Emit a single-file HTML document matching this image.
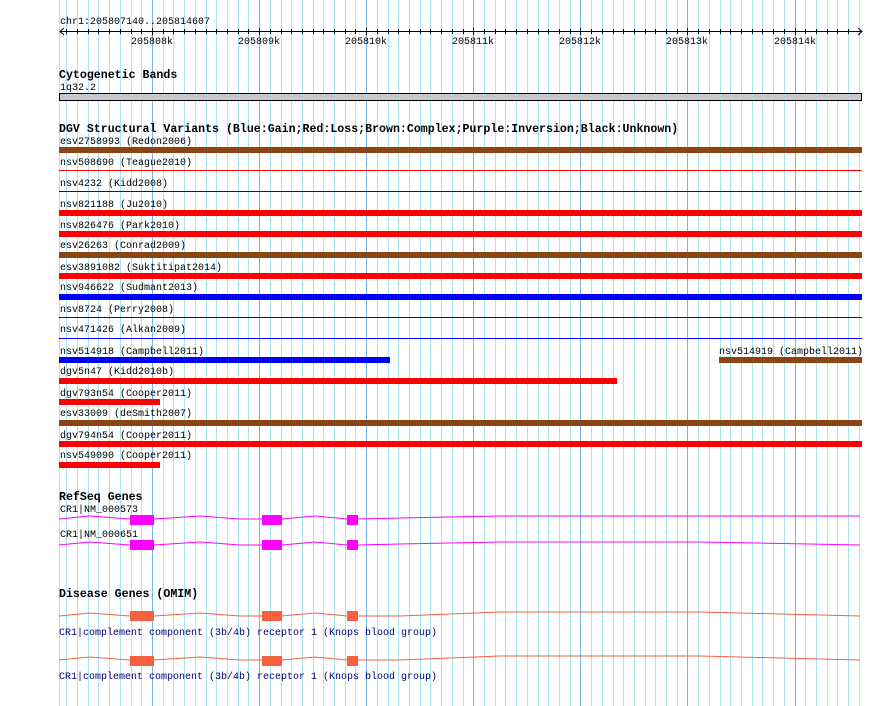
<!DOCTYPE html>
<html><head><meta charset="utf-8"><style>
html,body{margin:0;padding:0;background:#fff;width:890px;height:706px;overflow:hidden}
svg{display:block}
text{font-family:"Liberation Mono","DejaVu Sans Mono",monospace;font-size:10px;fill:#000}
.t{font-weight:bold;font-size:11.6px}
.b{fill:#00007a}
</style></head><body>
<svg width="890" height="706" xmlns="http://www.w3.org/2000/svg" shape-rendering="crispEdges">
<path stroke="#a8e6ee" stroke-width="1" fill="none" d="M59.5 0V706M66.5 0V706M77.5 0V706M88.5 0V706M98.5 0V706M109.5 0V706M120.5 0V706M131.5 0V706M141.5 0V706M163.5 0V706M173.5 0V706M184.5 0V706M195.5 0V706M206.5 0V706M216.5 0V706M227.5 0V706M238.5 0V706M248.5 0V706M270.5 0V706M281.5 0V706M291.5 0V706M302.5 0V706M313.5 0V706M323.5 0V706M334.5 0V706M345.5 0V706M355.5 0V706M377.5 0V706M388.5 0V706M398.5 0V706M409.5 0V706M420.5 0V706M430.5 0V706M441.5 0V706M452.5 0V706M463.5 0V706M484.5 0V706M495.5 0V706M505.5 0V706M516.5 0V706M527.5 0V706M538.5 0V706M548.5 0V706M559.5 0V706M570.5 0V706M591.5 0V706M602.5 0V706M613.5 0V706M623.5 0V706M634.5 0V706M645.5 0V706M655.5 0V706M666.5 0V706M677.5 0V706M698.5 0V706M709.5 0V706M720.5 0V706M730.5 0V706M741.5 0V706M752.5 0V706M762.5 0V706M773.5 0V706M784.5 0V706M805.5 0V706M816.5 0V706M827.5 0V706M837.5 0V706M848.5 0V706M859.5 0V706"/>
<path stroke="#78b4e4" stroke-width="1" fill="none" d="M152.5 0V706M259.5 0V706M366.5 0V706M473.5 0V706M580.5 0V706M687.5 0V706M795.5 0V706"/>
<text x="60" y="24">chr1:205807140..205814607</text>
<rect x="60" y="31" width="802" height="1" fill="#000"/>
<path stroke="#000" stroke-width="1" fill="none" d="M66.5 29V34M77.5 29V34M88.5 29V34M98.5 29V34M109.5 29V34M120.5 29V34M131.5 29V34M141.5 29V34M163.5 29V34M173.5 29V34M184.5 29V34M195.5 29V34M206.5 29V34M216.5 29V34M227.5 29V34M238.5 29V34M248.5 29V34M270.5 29V34M281.5 29V34M291.5 29V34M302.5 29V34M313.5 29V34M323.5 29V34M334.5 29V34M345.5 29V34M355.5 29V34M377.5 29V34M388.5 29V34M398.5 29V34M409.5 29V34M420.5 29V34M430.5 29V34M441.5 29V34M452.5 29V34M463.5 29V34M484.5 29V34M495.5 29V34M505.5 29V34M516.5 29V34M527.5 29V34M538.5 29V34M548.5 29V34M559.5 29V34M570.5 29V34M591.5 29V34M602.5 29V34M613.5 29V34M623.5 29V34M634.5 29V34M645.5 29V34M655.5 29V34M666.5 29V34M677.5 29V34M698.5 29V34M709.5 29V34M720.5 29V34M730.5 29V34M741.5 29V34M752.5 29V34M762.5 29V34M773.5 29V34M784.5 29V34M805.5 29V34M816.5 29V34M827.5 29V34M837.5 29V34M848.5 29V34M152.5 28V35M259.5 28V35M366.5 28V35M473.5 28V35M580.5 28V35M687.5 28V35M795.5 28V35"/>
<path d="M64 28 L60 31.5 L64 35 M858 28 L862 31.5 L858 35" stroke="#000" fill="none" shape-rendering="auto"/>
<g text-anchor="middle">
<text x="152" y="44">205808k</text><text x="259" y="44">205809k</text><text x="366" y="44">205810k</text><text x="473" y="44">205811k</text><text x="580" y="44">205812k</text><text x="687" y="44">205813k</text><text x="795" y="44">205814k</text>
</g>
<text class="t" x="59" y="78">Cytogenetic Bands</text>
<text x="60" y="90">1q32.2</text>
<rect x="59.5" y="93.5" width="802" height="7" fill="#c8c8c8" stroke="#000"/>
<text class="t" x="59" y="132">DGV Structural Variants (Blue:Gain;Red:Loss;Brown:Complex;Purple:Inversion;Black:Unknown)</text>
<text x="60" y="144">esv2758993 (Redon2006)</text>
<rect x="59" y="147" width="803" height="6" fill="#8b4513"/>
<text x="60" y="165">nsv508690 (Teague2010)</text>
<rect x="59" y="170" width="803" height="1" fill="#f00"/>
<text x="60" y="186">nsv4232 (Kidd2008)</text>
<rect x="59" y="191" width="803" height="1" fill="#00f"/>
<text x="60" y="207">nsv821188 (Ju2010)</text>
<rect x="59" y="210" width="803" height="6" fill="#f00"/>
<text x="60" y="228">nsv826476 (Park2010)</text>
<rect x="59" y="231" width="803" height="6" fill="#f00"/>
<text x="60" y="248">esv26263 (Conrad2009)</text>
<rect x="59" y="252" width="803" height="6" fill="#8b4513"/>
<text x="60" y="270">esv3891082 (Suktitipat2014)</text>
<rect x="59" y="273" width="803" height="6" fill="#f00"/>
<text x="60" y="290">nsv946622 (Sudmant2013)</text>
<rect x="59" y="294" width="803" height="6" fill="#00f"/>
<text x="60" y="312">nsv8724 (Perry2008)</text>
<rect x="59" y="317" width="803" height="1" fill="#00f"/>
<text x="60" y="332">nsv471426 (Alkan2009)</text>
<rect x="59" y="338" width="803" height="1" fill="#00f"/>
<text x="60" y="354">nsv514918 (Campbell2011)</text>
<rect x="59" y="357" width="331" height="6" fill="#00f"/>
<text x="719" y="354">nsv514919 (Campbell2011)</text>
<rect x="719" y="357" width="143" height="6" fill="#8b4513"/>
<text x="60" y="374">dgv5n47 (Kidd2010b)</text>
<rect x="59" y="378" width="558" height="6" fill="#f00"/>
<text x="60" y="396">dgv793n54 (Cooper2011)</text>
<rect x="59" y="399" width="101" height="6" fill="#f00"/>
<text x="60" y="416">esv33009 (deSmith2007)</text>
<rect x="59" y="420" width="803" height="6" fill="#8b4513"/>
<text x="60" y="438">dgv794n54 (Cooper2011)</text>
<rect x="59" y="441" width="803" height="6" fill="#f00"/>
<text x="60" y="458">nsv549090 (Cooper2011)</text>
<rect x="59" y="462" width="101" height="6" fill="#f00"/>
<text class="t" x="59" y="500">RefSeq Genes</text>
<text x="60" y="512">CR1|NM_000573</text>
<g fill="none" stroke="#f0f" stroke-width="1" shape-rendering="auto">
<polyline points="59,519 90,516 130,519 154,519 200,516 240,519 262,519 282,519 315,516 347,519 357,519 400,518 500,516 600,516 700,516 860,516"/>
<polyline points="59,545 90,542 130,545 154,545 200,542 240,545 262,545 282,545 315,542 347,545 357,545 400,544 500,542 600,542 700,542 860,545"/>
</g>
<g fill="#f0f">
<rect x="130" y="515" width="24" height="10"/><rect x="262" y="515" width="20" height="10"/><rect x="347" y="515" width="11" height="10"/>
<rect x="130" y="540" width="24" height="10"/><rect x="262" y="540" width="20" height="10"/><rect x="347" y="540" width="11" height="10"/>
</g>
<text x="60" y="537">CR1|NM_000651</text>
<text class="t" x="59" y="597">Disease Genes (OMIM)</text>
<g fill="none" stroke="#f56040" stroke-width="1" shape-rendering="auto">
<polyline points="59,616 90,613 130,616 154,616 200,613 240,616 262,616 282,616 315,613 347,616 357,616 400,616 500,612 600,612 700,612 860,616"/>
<polyline points="59,660 90,657 130,660 154,660 200,657 240,660 262,660 282,660 315,657 347,660 357,660 400,660 500,656 600,656 700,656 860,660"/>
</g>
<g fill="#f56040">
<rect x="130" y="611" width="24" height="10"/><rect x="262" y="611" width="20" height="10"/><rect x="347" y="611" width="11" height="10"/>
<rect x="130" y="656" width="24" height="10"/><rect x="262" y="656" width="20" height="10"/><rect x="347" y="656" width="11" height="10"/>
</g>
<text class="b" x="59" y="635">CR1|complement component (3b/4b) receptor 1 (Knops blood group)</text>
<text class="b" x="59" y="679">CR1|complement component (3b/4b) receptor 1 (Knops blood group)</text>
</svg>
</body></html>
